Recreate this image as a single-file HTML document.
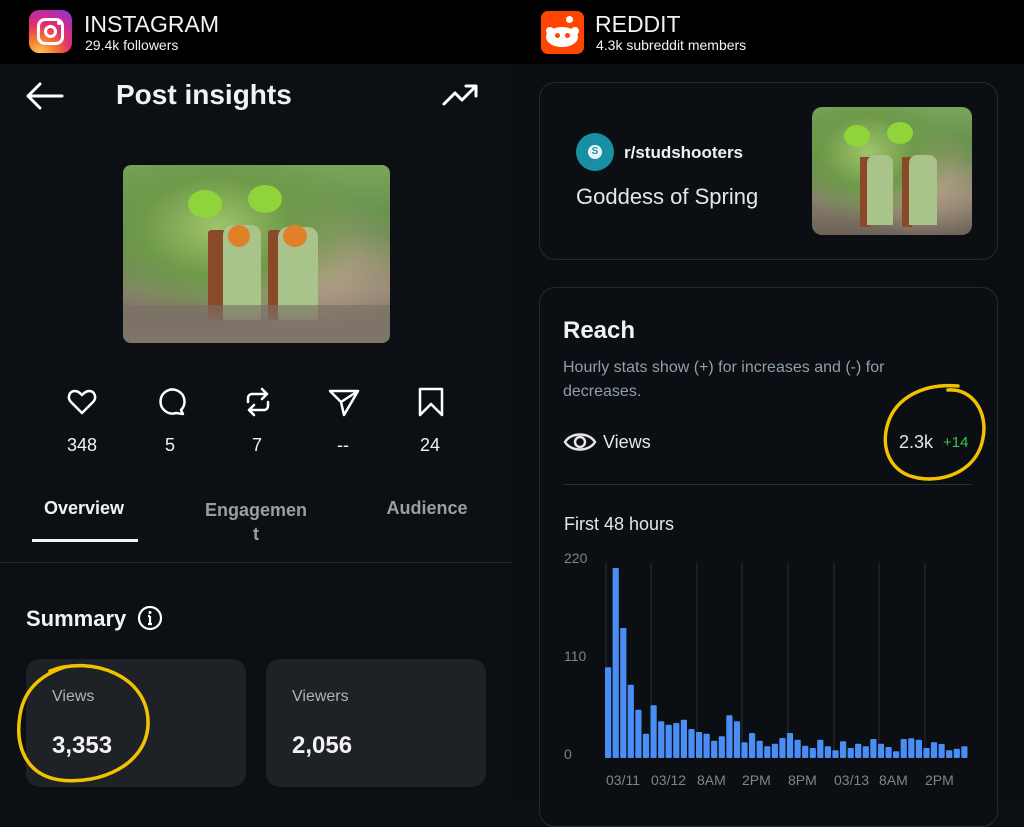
<!DOCTYPE html>
<html><head><meta charset="utf-8"><style>
*{margin:0;padding:0;box-sizing:border-box}
body{width:1024px;height:800px;background:#0c1014;font-family:"Liberation Sans",sans-serif;color:#f2f2f2;position:relative;overflow:hidden}
.a{position:absolute;white-space:nowrap}
.top{left:0;top:0;width:1024px;height:64px;background:#000}
.ph{background:radial-gradient(ellipse at 35% 35%,#9fc46a 0,#6f9a4a 30%,transparent 60%),radial-gradient(ellipse at 70% 60%,#b9a38a 0,transparent 50%),linear-gradient(180deg,#7aa55a 0%,#5f8a48 40%,#8a8070 70%,#6d6258 100%);overflow:hidden}
.card{background:#1e2126;border-radius:14px}
.rc{border:1.5px solid #262a30;border-radius:16px;background:#0b0e12}
</style></head><body>
<div class="a top"></div>
<div class="a" style="left:514px;top:64px;width:510px;height:736px;background:#0a0d11"></div>
<!-- Instagram header -->
<div class="a" style="left:29px;top:10px;width:43px;height:43px;border-radius:10px;background:radial-gradient(circle at 25% 105%,#fdd35a 0,#f7782f 30%,#e1306c 55%,#c22c9e 75%,#7a3ad6 100%)"></div>
<div class="a" style="left:37px;top:18px;width:27px;height:27px;border:3px solid #fff;border-radius:8px"></div>
<div class="a" style="left:44px;top:25px;width:13px;height:13px;border:3px solid #fff;border-radius:50%"></div>
<div class="a" style="left:57px;top:21px;width:4px;height:4px;background:#fff;border-radius:50%"></div>
<div class="a" style="left:84px;top:11px;font-size:23px">INSTAGRAM</div>
<div class="a" style="left:85px;top:37px;font-size:14px">29.4k followers</div>
<!-- nav -->
<svg class="a" style="left:25px;top:82px" width="40" height="28" viewBox="0 0 40 28"><path d="M3 14H37M15 2L3 14L15 26" stroke="#fff" stroke-width="3" fill="none" stroke-linecap="round" stroke-linejoin="round"/></svg>
<div class="a" style="left:116px;top:79px;font-size:28px;font-weight:bold">Post insights</div>
<svg class="a" style="left:442px;top:82px" width="38" height="26" viewBox="0 0 38 26"><path d="M2 22L13 11L20 18L34 4M24 4H34V14" stroke="#fff" stroke-width="3" fill="none" stroke-linecap="round" stroke-linejoin="round"/></svg>
<!-- image -->
<div class="a ph" style="left:123px;top:165px;width:267px;height:178px;border-radius:8px">
<div class="a" style="left:85px;top:65px;width:18px;height:90px;background:#8a4a2a;border-radius:3px"></div>
<div class="a" style="left:100px;top:60px;width:38px;height:95px;background:#a9c48a;border-radius:10px 10px 2px 2px"></div>
<div class="a" style="left:105px;top:60px;width:22px;height:22px;background:#e0802a;border-radius:50%"></div>
<div class="a" style="left:145px;top:65px;width:18px;height:90px;background:#8a4a2a;border-radius:3px"></div>
<div class="a" style="left:155px;top:62px;width:40px;height:93px;background:#a9c48a;border-radius:10px 10px 2px 2px"></div>
<div class="a" style="left:160px;top:60px;width:24px;height:22px;background:#e0802a;border-radius:50%"></div>
<div class="a" style="left:65px;top:25px;width:34px;height:28px;background:#8fd43a;border-radius:50%"></div>
<div class="a" style="left:125px;top:20px;width:34px;height:28px;background:#8fd43a;border-radius:50%"></div>
<div class="a" style="left:0;top:140px;width:267px;height:38px;background:linear-gradient(180deg,rgba(120,110,100,.6),#80766c)"></div>
</div>
<!-- icons -->
<svg class="a" style="left:66px;top:386px" width="32" height="32" viewBox="0 0 32 32"><path d="M16 27L5 16C1 12 3 5 9 5C12 5 14 7 16 9C18 7 20 5 23 5C29 5 31 12 27 16Z" stroke="#fff" stroke-width="2.5" fill="none" stroke-linejoin="round"/></svg>
<svg class="a" style="left:154px;top:386px" width="34" height="32" viewBox="0 0 34 32"><path d="M27 24A12 12 0 1 0 22 27L29 28Z" stroke="#fff" stroke-width="2.5" fill="none" stroke-linejoin="round"/></svg>
<svg class="a" style="left:243px;top:386px" width="30" height="32" viewBox="0 0 30 32"><path d="M5 16V12A4 4 0 0 1 9 8H24M19 3L24 8L19 13M25 16V20A4 4 0 0 1 21 24H6M11 19L6 24L11 29" stroke="#fff" stroke-width="2.5" fill="none" stroke-linecap="round" stroke-linejoin="round"/></svg>
<svg class="a" style="left:327px;top:386px" width="34" height="32" viewBox="0 0 34 32"><path d="M3 5H31L17 29L14 16ZM14 16L31 5" stroke="#fff" stroke-width="2.5" fill="none" stroke-linejoin="round"/></svg>
<svg class="a" style="left:416px;top:386px" width="30" height="32" viewBox="0 0 30 32"><path d="M4 3H26V29L15 18L4 29Z" stroke="#fff" stroke-width="2.5" fill="none" stroke-linejoin="round"/></svg>
<div class="a" style="left:52px;top:435px;width:60px;text-align:center;font-size:18px">348</div>
<div class="a" style="left:140px;top:435px;width:60px;text-align:center;font-size:18px">5</div>
<div class="a" style="left:227px;top:435px;width:60px;text-align:center;font-size:18px">7</div>
<div class="a" style="left:313px;top:435px;width:60px;text-align:center;font-size:18px">--</div>
<div class="a" style="left:400px;top:435px;width:60px;text-align:center;font-size:18px">24</div>
<!-- tabs -->
<div class="a" style="left:44px;top:498px;font-size:18px;font-weight:bold">Overview</div>
<div class="a" style="left:196px;top:498px;width:120px;text-align:center;font-size:18px;font-weight:bold;color:#9a9da2;line-height:24px;white-space:normal">Engagemen<br>t</div>
<div class="a" style="left:380px;top:498px;width:94px;text-align:center;font-size:18px;font-weight:bold;color:#9a9da2">Audience</div>
<div class="a" style="left:32px;top:539px;width:106px;height:3px;background:#f2f2f2"></div>
<div class="a" style="left:0;top:562px;width:512px;height:1px;background:#25292e"></div>
<div class="a" style="left:26px;top:606px;font-size:22px;font-weight:bold">Summary</div>
<svg class="a" style="left:137px;top:605px" width="26" height="26" viewBox="0 0 26 26"><circle cx="13" cy="13" r="11" stroke="#fff" stroke-width="2.2" fill="none"/><path d="M13 11V19M11 11H13M11 19H15" stroke="#fff" stroke-width="2.2"/><circle cx="13" cy="7.5" r="1.5" fill="#fff"/></svg>
<div class="a card" style="left:26px;top:659px;width:220px;height:128px"></div>
<div class="a card" style="left:266px;top:659px;width:220px;height:128px"></div>
<div class="a" style="left:52px;top:688px;font-size:16px;color:#b0b3b8">Views</div>
<div class="a" style="left:52px;top:732px;font-size:24px;font-weight:bold">3,353</div>
<div class="a" style="left:292px;top:688px;font-size:16px;color:#b0b3b8">Viewers</div>
<div class="a" style="left:292px;top:732px;font-size:24px;font-weight:bold">2,056</div>
<svg class="a" style="left:10px;top:655px" width="150" height="135" viewBox="0 0 150 135"><path d="M40 16C80 0 140 20 138 70C136 110 90 130 50 125C15 120 5 90 10 60C14 35 30 20 55 12" stroke="#f2c200" stroke-width="3.5" fill="none" stroke-linecap="round"/></svg>
<!-- Reddit header -->
<div class="a" style="left:541px;top:11px;width:43px;height:43px;border-radius:7px;background:#ff4500"></div>
<div class="a" style="left:546px;top:27px;width:32px;height:20px;border-radius:50%;background:#fff"></div>
<div class="a" style="left:546px;top:27px;width:8px;height:8px;border-radius:50%;background:#fff"></div>
<div class="a" style="left:571px;top:27px;width:8px;height:8px;border-radius:50%;background:#fff"></div>
<div class="a" style="left:566px;top:16px;width:7px;height:7px;border-radius:50%;background:#fff"></div>
<div class="a" style="left:555px;top:33px;width:5px;height:5px;border-radius:50%;background:#ff4500"></div>
<div class="a" style="left:565px;top:33px;width:5px;height:5px;border-radius:50%;background:#ff4500"></div>
<div class="a" style="left:595px;top:11px;font-size:23px">REDDIT</div>
<div class="a" style="left:596px;top:37px;font-size:14px">4.3k subreddit members</div>
<!-- card 1 -->
<div class="a rc" style="left:539px;top:82px;width:459px;height:178px"></div>
<div class="a" style="left:576px;top:133px;width:38px;height:38px;border-radius:50%;background:#1790a3"></div>
<div class="a" style="left:588px;top:145px;width:14px;height:14px;border-radius:50%;background:#e8f6f8;color:#1790a3;font-size:10px;font-weight:bold;text-align:center;line-height:14px">S</div>
<div class="a" style="left:624px;top:143px;font-size:17px;font-weight:bold">r/studshooters</div>
<div class="a" style="left:576px;top:184px;font-size:22px;color:#e6e6e6">Goddess of Spring</div>
<div class="a ph" style="left:812px;top:107px;width:160px;height:128px;border-radius:10px">
<div class="a" style="left:48px;top:50px;width:10px;height:70px;background:#8a4a2a"></div>
<div class="a" style="left:55px;top:48px;width:26px;height:70px;background:#a9c48a;border-radius:8px 8px 0 0"></div>
<div class="a" style="left:90px;top:50px;width:10px;height:70px;background:#8a4a2a"></div>
<div class="a" style="left:97px;top:48px;width:28px;height:70px;background:#a9c48a;border-radius:8px 8px 0 0"></div>
<div class="a" style="left:32px;top:18px;width:26px;height:22px;background:#8fd43a;border-radius:50%"></div>
<div class="a" style="left:75px;top:15px;width:26px;height:22px;background:#8fd43a;border-radius:50%"></div>
</div>
<!-- card 2 -->
<div class="a rc" style="left:539px;top:287px;width:459px;height:540px"></div>
<div class="a" style="left:563px;top:317px;font-size:24px;font-weight:bold">Reach</div>
<div class="a" style="left:563px;top:356px;font-size:16px;color:#8fa0a8;line-height:24px;white-space:normal;width:380px">Hourly stats show (+) for increases and (-) for decreases.</div>
<svg class="a" style="left:563px;top:430px" width="34" height="24" viewBox="0 0 34 24"><path d="M2 12C8 2 26 2 32 12C26 22 8 22 2 12Z" stroke="#e6e6e6" stroke-width="2.5" fill="none"/><circle cx="17" cy="12" r="5" stroke="#e6e6e6" stroke-width="2.5" fill="none"/></svg>
<div class="a" style="left:603px;top:432px;font-size:18px;color:#e6e6e6">Views</div>
<div class="a" style="left:899px;top:432px;font-size:18px;color:#e6e6e6">2.3k</div>
<div class="a" style="left:943px;top:434px;font-size:15px;color:#3ac44a">+14</div>
<svg class="a" style="left:878px;top:378px" width="112" height="110" viewBox="0 0 112 110"><path d="M70 12C95 10 110 35 105 60C100 90 70 105 40 100C12 95 2 70 10 45C18 20 45 5 80 8" stroke="#f2c200" stroke-width="3.5" fill="none" stroke-linecap="round"/></svg>
<div class="a" style="left:563px;top:484px;width:409px;height:1px;background:#2a2e33"></div>
<div class="a" style="left:564px;top:514px;font-size:18px;color:#e6e6e6">First 48 hours</div>
<svg class="a" style="left:540px;top:540px" width="440" height="260" viewBox="0 0 440 260" font-family="Liberation Sans" font-size="14" fill="#7e858c">
<g stroke="#2b2f34" stroke-width="1"><path d="M66 23V218M111 23V218M157 23V218M202 23V218M248 23V218M294 23V218M339 23V218M385 23V218"/></g>
<text x="24" y="23">220</text><text x="24" y="121">110</text><text x="24" y="219">0</text>
<g fill="#4a8df5">
<rect x="65" y="127.3" width="6.2" height="90.7" rx="1"/><rect x="72.6" y="28" width="6.2" height="190" rx="1"/><rect x="80.2" y="88" width="6.2" height="130" rx="1"/><rect x="87.7" y="144.7" width="6.2" height="73.3" rx="1"/><rect x="95.3" y="169.7" width="6.2" height="48.3" rx="1"/><rect x="102.9" y="193.7" width="6.2" height="24.3" rx="1"/><rect x="110.5" y="165.3" width="6.2" height="52.7" rx="1"/><rect x="118.1" y="181.3" width="6.2" height="36.7" rx="1"/><rect x="125.6" y="184.7" width="6.2" height="33.3" rx="1"/><rect x="133.2" y="183" width="6.2" height="35" rx="1"/><rect x="140.8" y="179.7" width="6.2" height="38.3" rx="1"/><rect x="148.4" y="189" width="6.2" height="29" rx="1"/><rect x="156" y="192" width="6.2" height="26" rx="1"/><rect x="163.5" y="193.7" width="6.2" height="24.3" rx="1"/><rect x="171.1" y="200.7" width="6.2" height="17.3" rx="1"/><rect x="178.7" y="196.3" width="6.2" height="21.7" rx="1"/><rect x="186.3" y="175.3" width="6.2" height="42.7" rx="1"/><rect x="193.9" y="181.3" width="6.2" height="36.7" rx="1"/><rect x="201.4" y="202.3" width="6.2" height="15.7" rx="1"/><rect x="209" y="193" width="6.2" height="25" rx="1"/><rect x="216.6" y="200.7" width="6.2" height="17.3" rx="1"/><rect x="224.2" y="206.3" width="6.2" height="11.7" rx="1"/><rect x="231.8" y="203.7" width="6.2" height="14.3" rx="1"/><rect x="239.3" y="198" width="6.2" height="20" rx="1"/><rect x="246.9" y="193" width="6.2" height="25" rx="1"/><rect x="254.5" y="199.7" width="6.2" height="18.3" rx="1"/><rect x="262.1" y="205.7" width="6.2" height="12.3" rx="1"/><rect x="269.7" y="208" width="6.2" height="10" rx="1"/><rect x="277.2" y="199.7" width="6.2" height="18.3" rx="1"/><rect x="284.8" y="206.3" width="6.2" height="11.7" rx="1"/><rect x="292.4" y="210.3" width="6.2" height="7.7" rx="1"/><rect x="300" y="201.3" width="6.2" height="16.7" rx="1"/><rect x="307.6" y="208" width="6.2" height="10" rx="1"/><rect x="315.1" y="203.7" width="6.2" height="14.3" rx="1"/><rect x="322.7" y="206.3" width="6.2" height="11.7" rx="1"/><rect x="330.3" y="199" width="6.2" height="19" rx="1"/><rect x="337.9" y="203.7" width="6.2" height="14.3" rx="1"/><rect x="345.5" y="207" width="6.2" height="11" rx="1"/><rect x="353" y="211.3" width="6.2" height="6.7" rx="1"/><rect x="360.6" y="199" width="6.2" height="19" rx="1"/><rect x="368.2" y="198.3" width="6.2" height="19.7" rx="1"/><rect x="375.8" y="199.7" width="6.2" height="18.3" rx="1"/><rect x="383.4" y="208" width="6.2" height="10" rx="1"/><rect x="390.9" y="202.3" width="6.2" height="15.7" rx="1"/><rect x="398.5" y="204" width="6.2" height="14" rx="1"/><rect x="406.1" y="210.3" width="6.2" height="7.7" rx="1"/><rect x="413.7" y="208.7" width="6.2" height="9.3" rx="1"/><rect x="421.3" y="206.3" width="6.2" height="11.7" rx="1"/>
</g>
<text x="66" y="245">03/11</text><text x="111" y="245">03/12</text><text x="157" y="245">8AM</text><text x="202" y="245">2PM</text><text x="248" y="245">8PM</text><text x="294" y="245">03/13</text><text x="339" y="245">8AM</text><text x="385" y="245">2PM</text>
</svg>
</body></html>
